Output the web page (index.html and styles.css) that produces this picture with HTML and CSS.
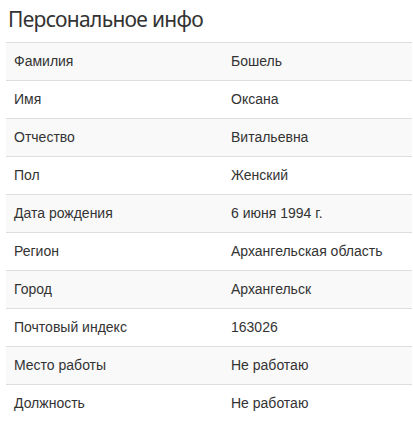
FILE: index.html
```html
<!DOCTYPE html>
<html>
<head>
<meta charset="utf-8">
<link rel="stylesheet" href="styles.css">
</head>
<body>
<div class="panel">
  <h3 class="title">Персональное инфо</h3>
  <table class="info">
    <tbody>
      <tr><td class="k">Фамилия</td><td>Бошель</td></tr>
      <tr><td class="k">Имя</td><td>Оксана</td></tr>
      <tr><td class="k">Отчество</td><td>Витальевна</td></tr>
      <tr><td class="k">Пол</td><td>Женский</td></tr>
      <tr><td class="k">Дата рождения</td><td>6 июня 1994 г.</td></tr>
      <tr><td class="k">Регион</td><td>Архангельская область</td></tr>
      <tr><td class="k">Город</td><td>Архангельск</td></tr>
      <tr><td class="k">Почтовый индекс</td><td>163026</td></tr>
      <tr><td class="k">Место работы</td><td>Не работаю</td></tr>
      <tr><td class="k">Должность</td><td>Не работаю</td></tr>
    </tbody>
  </table>
</div>
</body>
</html>
```
FILE: styles.css
```css
html, body { margin: 0; padding: 0; background: #fff; }
body { font-family: "Liberation Sans", Arial, sans-serif; font-size: 14px; color: #333; }
.panel { padding: 0 1px 0 6px; }
.title {
  margin: 0;
  padding: 5px 0 0 2px;
  height: 42px;
  box-sizing: border-box;
  font-family: "Noto Sans", "Open Sans", sans-serif;
  font-weight: 400;
  font-size: 21px;
  letter-spacing: -0.7px;
  line-height: 28px;
  color: #333;
}
.info { width: 406px; border-collapse: collapse; border-spacing: 0; }
.info td {
  padding: 8px;
  line-height: 21px;
  border-top: 1px solid #ddd;
  vertical-align: top;
}
.info td.k { width: 201px; }
.info tr:nth-child(odd) td { background: #f9f9f9; }
```
